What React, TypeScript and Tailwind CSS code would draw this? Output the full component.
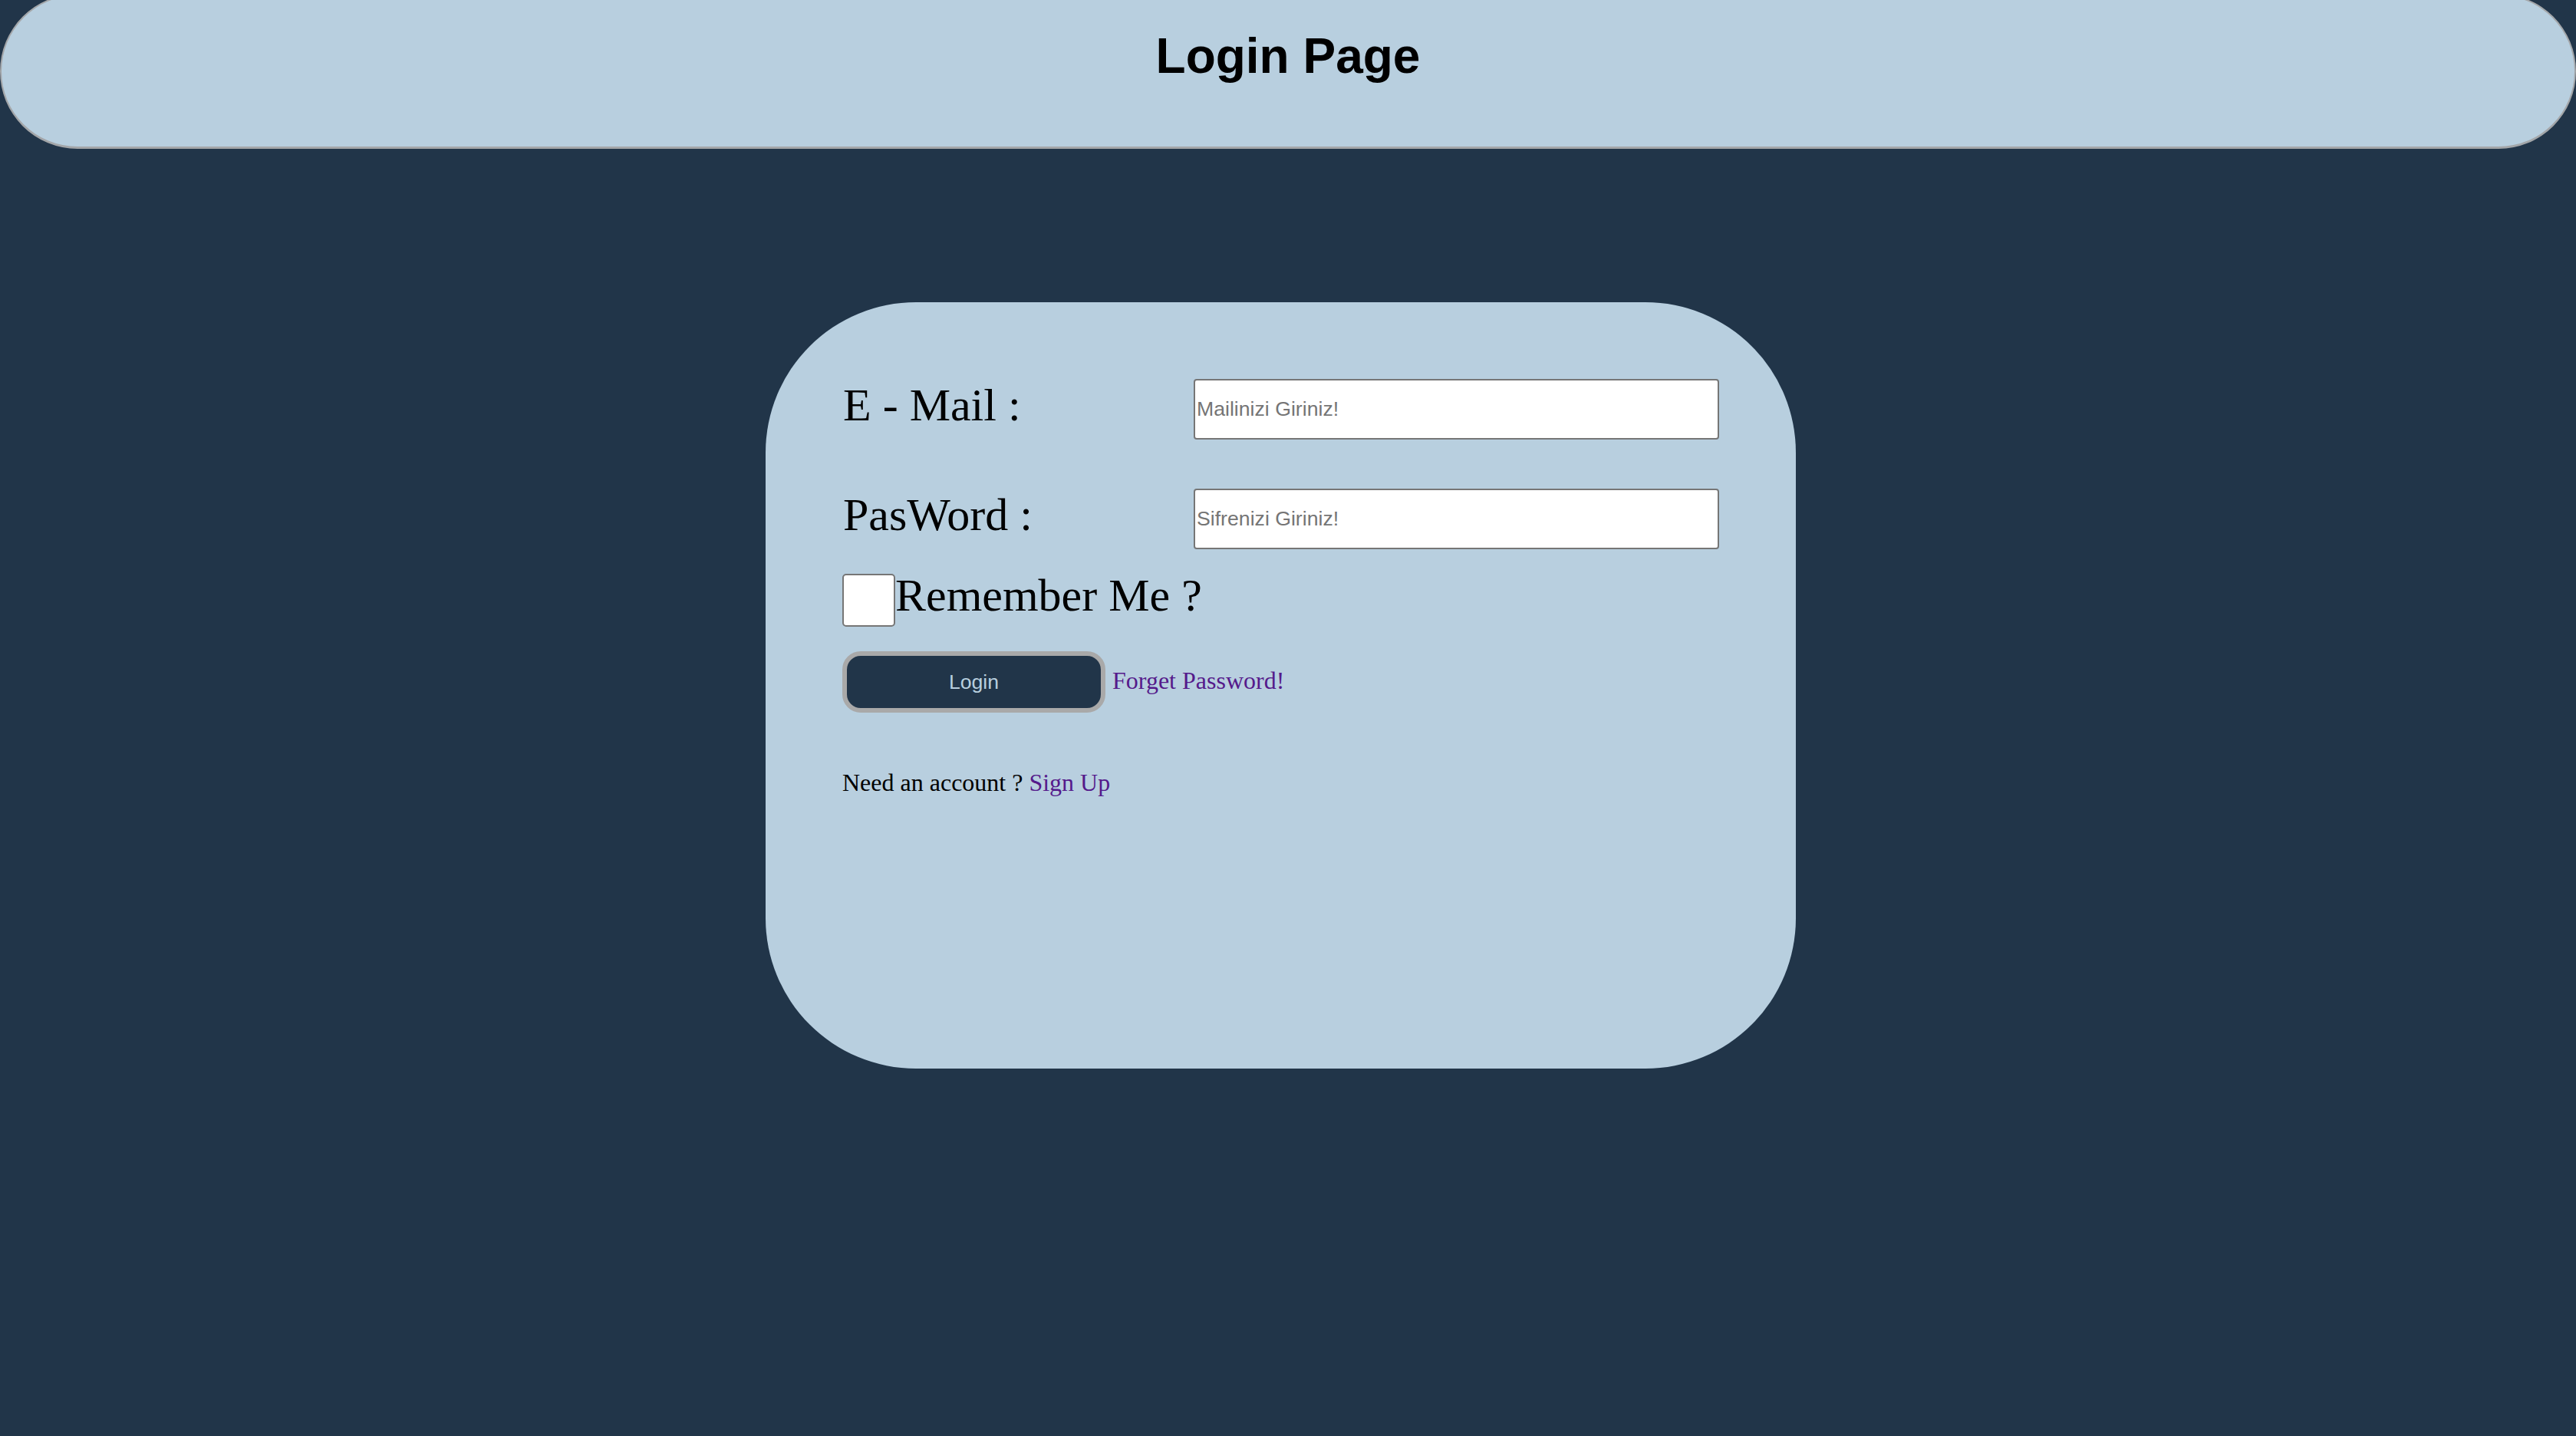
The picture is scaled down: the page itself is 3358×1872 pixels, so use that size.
import React from "react";

export default function App() {
  return (
    <div className="w-full h-[1872px] overflow-hidden bg-[#213549]">
      <header className="-mt-[8px] h-[202px] w-full rounded-[101px] border-2 border-b-[3px] border-[#a3a6a9] bg-[#b8cfdf] pt-[43px] text-center">
        <h1 className="m-0 text-[64px] leading-[73px] font-bold text-black [font-family:'Liberation_Sans',Arial,sans-serif]">
          Login Page
        </h1>
      </header>

      <main className="ml-[998px] mt-[200px] h-[999px] w-[1343px] rounded-[196px] bg-[#b8cfdf] px-[100px] pt-[100px] text-black [font-family:'Liberation_Serif','Times_New_Roman',serif]">
        <div className="flex items-start">
          <label className="w-[458px] pl-[1px] text-[60px] leading-[69px]">E - Mail :</label>
          <input
            type="email"
            placeholder="Mailinizi Giriniz!"
            className="h-[79px] flex-1 rounded-[4px] border-2 border-[#767676] bg-white px-[2px] text-[26.67px] text-black outline-none placeholder:text-[#757575] [font-family:'Liberation_Sans',Arial,sans-serif]"
          />
        </div>

        <div className="mt-[64px] flex items-start">
          <label className="w-[458px] pl-[1px] text-[60px] leading-[69px]">PasWord :</label>
          <input
            type="password"
            placeholder="Sifrenizi Giriniz!"
            className="h-[79px] flex-1 rounded-[4px] border-2 border-[#767676] bg-white px-[2px] text-[26.67px] text-black outline-none placeholder:text-[#757575] [font-family:'Liberation_Sans',Arial,sans-serif]"
          />
        </div>

        <div className="mt-[26px] flex items-start">
          <input
            type="checkbox"
            className="mt-[6px] h-[69px] w-[69px] shrink-0 appearance-none rounded-[5px] border-2 border-[#767676] bg-white"
          />
          <span className="text-[60px] leading-[69px]">Remember Me ?</span>
        </div>

        <div className="mt-[32px] flex items-baseline">
          <button className="flex h-[80px] w-[343px] items-center justify-center rounded-[24px] border-[6px] border-[#a9a9a9] bg-[#213549] text-[26.67px] text-[#b8cfdf] [font-family:'Liberation_Sans',Arial,sans-serif]">
            Login
          </button>
          <a href="#" className="ml-[9px] text-[32px] leading-[37px] text-[#551a8b]">
            Forget Password!
          </a>
        </div>

        <p className="mt-[73px] text-[32px] leading-[37px]">
          Need an account ?{" "}
          <a href="#" className="text-[#551a8b]">
            Sign Up
          </a>
        </p>
      </main>
    </div>
  );
}
